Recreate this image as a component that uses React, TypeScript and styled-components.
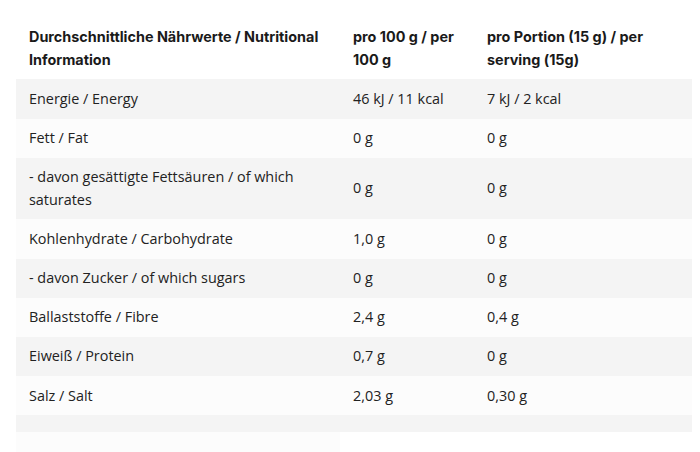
import React from "react";
import styled, { createGlobalStyle } from "styled-components";

const Global = createGlobalStyle`
  html, body { margin: 0; padding: 0; background: #ffffff; }
  body { font-family: "Open Sans", "Liberation Sans", sans-serif; color: #222222; }
`;

const Wrapper = styled.div`
  padding: 17.8px 8px 0 16px;
`;

const Table = styled.table`
  width: 676px;
  border-collapse: collapse;
  border-spacing: 0;
  table-layout: fixed;
  font-size: 14.4px;
  line-height: 22.4px;
`;

const HeadCell = styled.th`
  font-family: Inter, "Liberation Sans", sans-serif;
  font-weight: 700;
  text-align: left;
  vertical-align: middle;
  padding: 8.4px 12px 8.4px 13px;
  color: #1a1a1a;
  background: #ffffff;
`;

const Row = styled.tr<{ $shade: boolean }>`
  background: ${(p) => (p.$shade ? "#f4f4f4" : "#fcfcfc")};
`;

const Cell = styled.td`
  vertical-align: middle;
  padding: 8.4px 12px 8.4px 13px;
  color: #222222;
`;

const EmptyRow = styled.tr`
  background: #f4f4f4;
  height: 16.8px;
`;

const TailRow = styled.tr`
  height: 30px;
`;

const TailCell = styled.td`
  background: #fcfcfc;
  padding: 0;
`;

const rows: [string, string, string][] = [
  ["Energie / Energy", "46 kJ / 11 kcal", "7 kJ / 2 kcal"],
  ["Fett / Fat", "0 g", "0 g"],
  ["- davon gesättigte Fettsäuren / of which saturates", "0 g", "0 g"],
  ["Kohlenhydrate / Carbohydrate", "1,0 g", "0 g"],
  ["- davon Zucker / of which sugars", "0 g", "0 g"],
  ["Ballaststoffe / Fibre", "2,4 g", "0,4 g"],
  ["Eiweiß / Protein", "0,7 g", "0 g"],
  ["Salz / Salt", "2,03 g", "0,30 g"],
];

export default function App() {
  return (
    <>
      <Global />
      <Wrapper>
        <Table>
          <colgroup>
            <col style={{ width: 324 }} />
            <col style={{ width: 134 }} />
            <col style={{ width: 218 }} />
          </colgroup>
          <thead>
            <tr>
              <HeadCell>Durchschnittliche Nährwerte / Nutritional Information</HeadCell>
              <HeadCell>pro 100 g / per 100 g</HeadCell>
              <HeadCell>pro Portion (15 g) / per serving (15g)</HeadCell>
            </tr>
          </thead>
          <tbody>
            {rows.map((r, i) => (
              <Row key={i} $shade={i % 2 === 0}>
                <Cell>{r[0]}</Cell>
                <Cell>{r[1]}</Cell>
                <Cell>{r[2]}</Cell>
              </Row>
            ))}
            <EmptyRow>
              <td />
              <td />
              <td />
            </EmptyRow>
            <TailRow>
              <TailCell />
            </TailRow>
          </tbody>
        </Table>
      </Wrapper>
    </>
  );
}
